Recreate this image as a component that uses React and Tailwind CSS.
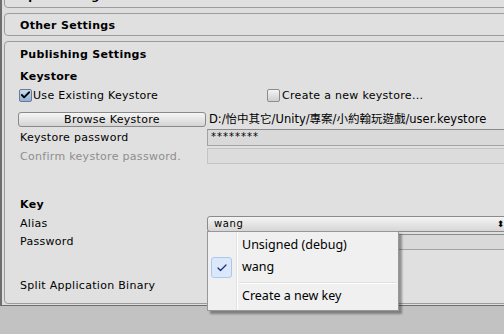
import { Check } from 'lucide-react'

const ui = { fontFamily: '"DejaVu Sans", "Noto Sans CJK TC", sans-serif' }
const menuFont = { fontFamily: '"Noto Sans", "Liberation Sans", sans-serif' }

function Box({ children, className = '' }) {
    return (
        <div className={`ml-[2px] -mr-[10px] rounded-[4px] border border-[#9c9c9c] bg-[#e0e0e0] ${className}`}>
            {children}
        </div>
    )
}

function Checkbox({ checked }) {
    return (
        <span className={`flex h-[13px] w-[13px] items-center justify-center rounded-[2px] border ${checked ? 'border-[#6a7a8c] bg-gradient-to-b from-[#c9dcf2] to-[#8fb0d8]' : 'border-[#8d8d8d] bg-gradient-to-b from-[#f4f4f4] to-[#cfcfcf]'}`}>
            {checked && <Check size={12} strokeWidth={4} className="text-black -mt-[1px]" />}
        </span>
    )
}

function Row({ label, muted, children, className = '' }) {
    return (
        <div className={`flex h-[17px] items-center ${className}`}>
            <span className={`w-[202px] shrink-0 pl-[15px] tracking-[0.3px] ${muted ? 'text-[#8e8e8e]' : 'text-black'}`}>{label}</span>
            {children}
        </div>
    )
}

export default function App() {
    return (
        <div className="relative h-[334px] w-[504px] overflow-hidden bg-[#c2c2c2] text-[11px] leading-none" style={ui}>
            <div className="h-[306px] overflow-hidden border-b border-l-2 border-[#6e6e6e] bg-[#dedede]">
                <Box className="-mt-[15px] h-[23px] pl-[15px] pt-[5px] font-bold tracking-[0.3px]">Splash Image</Box>
                <Box className="mt-[5px] flex h-[23px] items-center pl-[15px] pt-[2px] font-bold tracking-[0.3px]">Other Settings</Box>
                <Box className="mt-[5px] h-[263px]">
                    <div className="flex h-[22px] items-center pl-[15px] pt-[2px] font-bold tracking-[0.3px]">Publishing Settings</div>
                    <div className="mt-[3px] flex h-[18px] items-center pl-[15px] font-bold tracking-[0.3px]">Keystore</div>
                    <div className="mt-[2px] flex h-[17px] items-center tracking-[0.3px]">
                        <label className="flex w-[262px] items-center gap-[1px] pl-[14px]">
                            <Checkbox checked />
                            <span>Use Existing Keystore</span>
                        </label>
                        <label className="flex items-center gap-[2px]">
                            <Checkbox />
                            <span>Create a new keystore...</span>
                        </label>
                    </div>
                    <div className="mt-[8px] flex h-[15px] items-center">
                        <button className="ml-[13px] h-[15px] w-[188px] rounded-[3px] border border-[#8a8a8a] bg-gradient-to-b from-[#f6f6f6] to-[#d4d4d4] text-[11px] leading-none tracking-[0.3px] text-black">
                            Browse Keystore
                        </button>
                        <span className="ml-[3px] whitespace-nowrap text-[11.5px]">D:/怡中其它/Unity/專案/小約翰玩遊戲/user.keystore</span>
                    </div>
                    <Row label="Keystore password" className="mt-[1px] h-[18px]">
                        <div className="flex h-[17px] flex-1 items-center border border-[#a2a2a2] border-t-[#8a8a8a] bg-[#d9d9d9] pl-[3px] text-[10px] tracking-[1px]">********</div>
                    </Row>
                    <Row label="Confirm keystore password." muted className="mt-[1px] h-[18px]">
                        <div className="h-[16px] flex-1 border border-[#c4c4c4] bg-[#dcdcdc]" />
                    </Row>
                    <div className="mt-[30px] flex h-[18px] items-center pl-[15px] font-bold tracking-[0.3px]">Key</div>
                    <Row label="Alias" className="mt-[2px] h-[16px]">
                        <div className="relative flex h-[16px] flex-1 items-center rounded-[3px] border border-[#8a8a8a] bg-gradient-to-b from-[#f4f4f4] to-[#d6d6d6] pl-[6px] text-[10px] tracking-[0.6px]">
                            wang
                            <span className="absolute right-[7px] top-[2px] text-[9px] leading-[10px]">⬍</span>
                        </div>
                    </Row>
                    <Row label="Password" className="mt-[1px] h-[17px]">
                        <div className="h-[16px] flex-1 border border-[#a2a2a2] border-t-[#8a8a8a] bg-[#d9d9d9]" />
                    </Row>
                    <Row label="Split Application Binary" className="mt-[26px] h-[18px]" />
                </Box>
            </div>

            <div className="absolute left-[207px] top-[231px] flex h-[80px] w-[192px] border border-[#979797] bg-[#f0f0f0] shadow-[3px_3px_2px_rgba(0,0,0,0.35)]" style={menuFont}>
                <div className="relative w-[29px] border-r border-r-[#e2e2e2]">
                    <div className="absolute left-[3px] top-[25px] flex h-[21px] w-[21px] items-center justify-center rounded-[3px] border border-[#a8c8f0] bg-[#dbe8fa]">
                        <Check size={12} strokeWidth={2.5} className="text-[#1c2a8c]" />
                    </div>
                </div>
                <div className="flex-1 border-l border-l-white text-[12.5px] leading-none text-black">
                    <div className="flex h-[24px] items-center pl-[4px] pt-[2px]">Unsigned (debug)</div>
                    <div className="flex h-[22px] items-center pl-[4px]">wang</div>
                    <div className="mx-[1px] mt-[4px] h-[2px] border-t border-t-[#e0e0e0] border-b border-b-white" />
                    <div className="flex h-[22px] items-center pl-[4px] pt-[3px]">Create a new key</div>
                </div>
            </div>
        </div>
    )
}
